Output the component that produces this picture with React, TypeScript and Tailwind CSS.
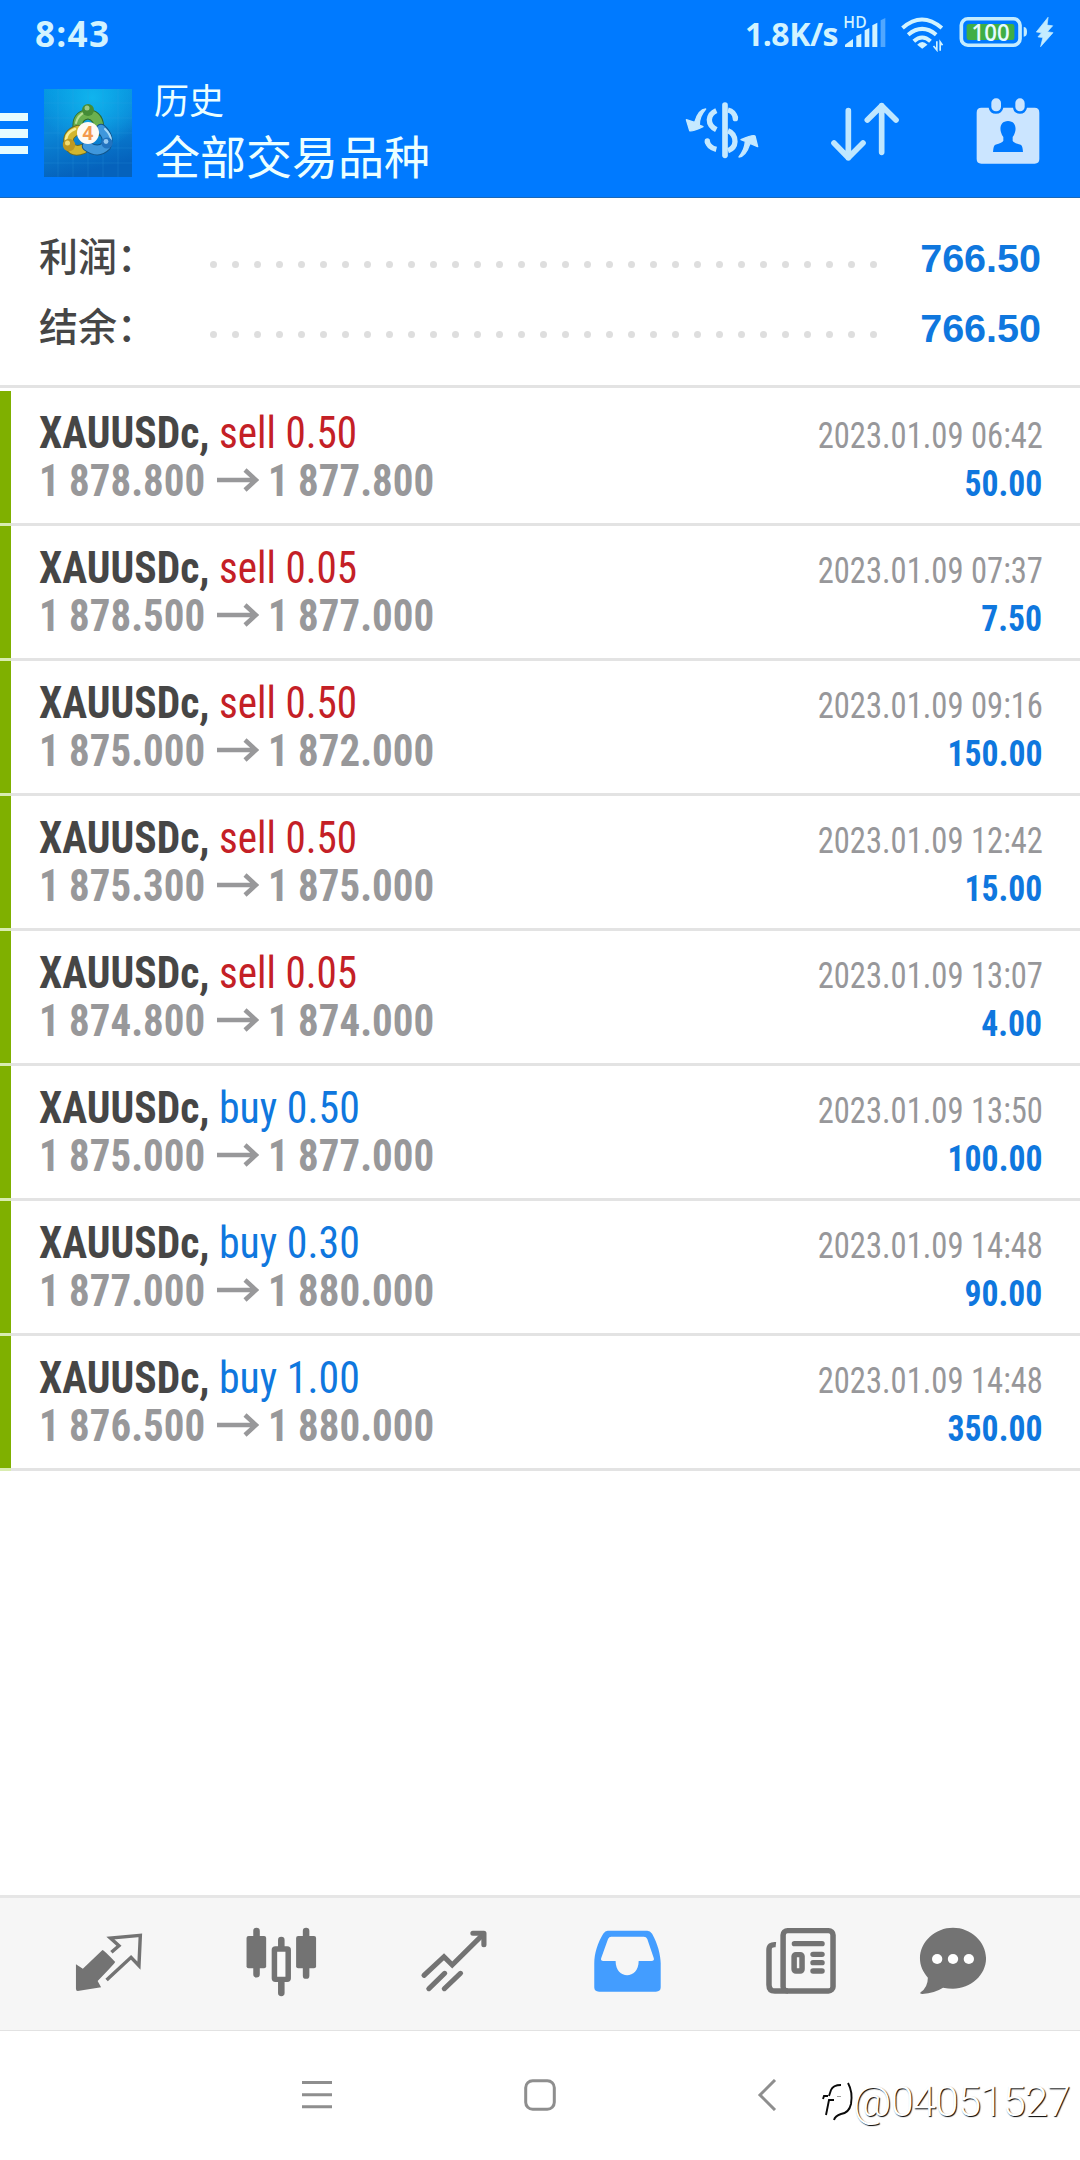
import type { ReactNode } from "react";

type Deal = { side: "sell" | "buy"; volume: string; open: string; close: string; time: string; profit: string };

const deals: Deal[] = [
  { side: "sell", volume: "0.50", open: "1 878.800", close: "1 877.800", time: "2023.01.09 06:42", profit: "50.00" },
  { side: "sell", volume: "0.05", open: "1 878.500", close: "1 877.000", time: "2023.01.09 07:37", profit: "7.50" },
  { side: "sell", volume: "0.50", open: "1 875.000", close: "1 872.000", time: "2023.01.09 09:16", profit: "150.00" },
  { side: "sell", volume: "0.50", open: "1 875.300", close: "1 875.000", time: "2023.01.09 12:42", profit: "15.00" },
  { side: "sell", volume: "0.05", open: "1 874.800", close: "1 874.000", time: "2023.01.09 13:07", profit: "4.00" },
  { side: "buy", volume: "0.50", open: "1 875.000", close: "1 877.000", time: "2023.01.09 13:50", profit: "100.00" },
  { side: "buy", volume: "0.30", open: "1 877.000", close: "1 880.000", time: "2023.01.09 14:48", profit: "90.00" },
  { side: "buy", volume: "1.00", open: "1 876.500", close: "1 880.000", time: "2023.01.09 14:48", profit: "350.00" },
];

function StatusBar() {
  return (
    <div className="flex h-[66px] items-start pr-[26px] pl-[35px] pt-4 font-['Open_Sans','Noto_Sans',sans-serif] font-semibold text-[#d2f3ff]">
      <span className="h-9 text-[35px] font-bold leading-[36px] tracking-[1.3px]">8:43</span>
      <span className="ml-auto h-9 text-[32px] font-bold leading-[35px] tracking-[-0.5px]">1.8K/s</span>
      <svg className="ml-[5px] h-8 w-11 shrink-0 overflow-visible" viewBox="608 48 132 96" fill="#d2f3ff">
        <text x="609" y="84" fontSize="47" fontWeight="600" textLength="70">HD</text>
        <path d="M614 141V134Q628 124 638 117V141Z" />
        <path d="M648 141V108L663 101V141ZM673 141V91L687 84V141ZM696 141V76L711 68V141Z" />
        <path d="M721 141V61L735 54V141Z" opacity=".38" />
      </svg>
      <svg className="ml-[13px] h-9 w-[45px] shrink-0" viewBox="780 48 134 108" fill="none" stroke="#d2f3ff" strokeWidth="12">
        <path d="M787 84Q845 33 905 84M804 104Q846 69 888 104M821 124Q846 101 871 124" />
        <path d="M831 134Q846 118 862 134L846 146Z" fill="#d2f3ff" stroke="none" />
        <path d="M890 124V150L880 138M900 152V126L907 136" strokeWidth="5" />
      </svg>
      <svg className="ml-[14px] h-8 w-[69px] shrink-0" viewBox="955 51 208 96" fill="none">
        <rect x="962" y="59" width="177" height="80" rx="20" stroke="#c4ecff" strokeWidth="11" />
        <rect x="978" y="75" width="144" height="48" rx="7" fill="#3fae45" />
        <path d="M1150 84Q1160 84 1160 99Q1160 113 1150 113Z" fill="#c4ecff" />
        <text x="993" y="125" fontSize="70" fontWeight="600" textLength="115" lengthAdjust="spacingAndGlyphs" fill="#e6fbff">100</text>
      </svg>
      <svg className="ml-[7px] h-8 w-[19px] shrink-0" viewBox="1183 51 58 96" fill="#c4ecff" stroke="#c4ecff" strokeWidth="2">
        <path d="M1223 54L1187 99L1203 101L1192 114L1207 116L1200 144L1238 101L1221 98L1237 80L1220 78Z" />
      </svg>
    </div>
  );
}

function AppLogo() {
  return (
    <svg className="ml-4 h-[88px] w-[88px] shrink-0" viewBox="0 0 88 88">
      <defs>
        <linearGradient id="sky" x1="0" y1="0" x2="0.25" y2="1">
          <stop offset="0" stopColor="#0596e0" />
          <stop offset=".5" stopColor="#0a85d6" />
          <stop offset="1" stopColor="#0562bc" />
        </linearGradient>
        <radialGradient id="glow" cx=".55" cy=".1" r=".6">
          <stop offset="0" stopColor="#10b4ee" />
          <stop offset="1" stopColor="#10b4ee" stopOpacity="0" />
        </radialGradient>
      </defs>
      <rect width="88" height="88" fill="url(#sky)" />
      <rect width="88" height="88" fill="url(#glow)" />
      <path d="M14 0V88M29 0V88M44 0V88M59 0V88M74 0V88M0 14H88M0 29H88M0 44H88M0 59H88M0 74H88" stroke="#35a5e4" strokeWidth=".6" opacity=".35" />
      <g fill="none" strokeLinecap="round">
        <path d="M34 40Q32 27 44 25Q56 27 55 42" stroke="#2f6b2b" strokeWidth="10.5" />
        <path d="M34 40Q32 27 44 25Q56 27 55 42" stroke="#6bb04e" strokeWidth="8.5" />
        <path d="M32 34Q34 26 41 23" stroke="#b8dd94" strokeWidth="2" />
        <path d="M34 41Q22 45 25 56Q29 64 39 60" stroke="#6a6a22" strokeWidth="10.5" />
        <path d="M34 41Q22 45 25 56Q29 64 39 60" stroke="#d2b62e" strokeWidth="8.5" />
        <path d="M31 40Q23 43 22 50" stroke="#f8ed93" strokeWidth="2.6" />
        <path d="M57 40Q66 48 62 57Q54 65 43 57" stroke="#12558b" strokeWidth="10.5" />
        <path d="M57 40Q66 48 62 57Q54 65 43 57" stroke="#3f97dc" strokeWidth="8.5" />
        <path d="M61 40Q67 46 67 51" stroke="#a6d8f7" strokeWidth="2" />
      </g>
      <circle cx="44" cy="21" r="6" fill="#458c37" /><circle cx="43" cy="19" r="2.5" fill="#9cc987" />
      <circle cx="25" cy="56" r="6.2" fill="#bd9822" /><circle cx="23.5" cy="54" r="2.5" fill="#f2dc70" />
      <circle cx="63" cy="54" r="5.6" fill="#2273bf" /><circle cx="62" cy="52.5" r="2.4" fill="#95c9f2" />
      <circle cx="44" cy="44" r="11" fill="#fffaf3" />
      <text x="44" y="51" textAnchor="middle" fontSize="19" fontWeight="700" fill="#f39a4e" fontFamily="Open Sans, sans-serif">4</text>
    </svg>
  );
}

function Toolbar() {
  return (
    <div className="flex h-[132px] items-start pr-[33px] pt-[23px]">
      <div className="mt-6 flex flex-col gap-2">
        <i className="h-[8.5px] w-7 bg-[#e6fcff]" />
        <i className="h-[8.5px] w-7 bg-[#e6fcff]" />
        <i className="h-[8.5px] w-7 bg-[#e6fcff]" />
      </div>
      <AppLogo />
      <div className="-mt-[10px] ml-[22px] flex flex-col font-['Noto_Sans_CJK_SC',sans-serif] font-normal text-[#ecffff]">
        <span className="h-[45px] text-[35px] leading-[40px]">历史</span>
        <span className="h-[60px] text-[46px] leading-[60px]">全部交易品种</span>
      </div>
      <div className="ml-auto mt-0.5 flex gap-[65px]">
        <svg className="h-[78px] w-[78px]" viewBox="129 273 234 234" fill="none" stroke="#c5e9ff" strokeWidth="16" strokeLinecap="round">
          <path d="M255 315V466" strokeWidth="17" />
          <path d="M264 330Q282 334 287 355M264 392Q285 400 285 425Q284 445 264 452M229 389Q208 378 208 359Q210 340 229 332M202 424Q205 442 229 448" strokeLinecap="butt" />
          <path d="M202 423V425M286 353V356" />
          <path d="M197 327Q176 328 164 367L139 359L149 392Q152 397 189 380L178 375Q177 350 197 327Z" fill="#c5e9ff" strokeWidth="4" strokeLinejoin="round" />
          <path d="M297 471Q317 470 330 430L353 440L345 408Q342 402 303 419L316 424Q315 448 297 471Z" fill="#c5e9ff" strokeWidth="4" strokeLinejoin="round" />
        </svg>
        <svg className="h-[78px] w-[78px]" viewBox="558 273 234 234" fill="none" stroke="#bfe7ff" strokeWidth="17" strokeLinecap="round" strokeLinejoin="round">
          <path d="M625 332V473M582 429L625 473L669 429" />
          <path d="M725 457V317M682 360L725 317L768 360" />
        </svg>
        <svg className="h-[78px] w-[78px]" viewBox="987 273 234 234" fill="#cbe5ff">
          <path d="M1024 323H1046Q1049 341 1068 341Q1086 341 1090 323H1119Q1122 341 1140 341Q1157 341 1161 323H1184Q1198 323 1198 338V477Q1198 491 1184 491H1024Q1010 491 1010 477V338Q1010 323 1024 323Z" />
          <rect x="1054" y="295" width="29" height="39" rx="14" />
          <rect x="1126" y="295" width="28" height="39" rx="14" />
          <path d="M1104 363C1124 363 1130 381 1125 397Q1122 408 1118 411V422Q1119 428 1142 434Q1148 437 1149 456H1059Q1060 437 1066 434Q1088 428 1090 422V411Q1086 408 1083 397C1078 381 1084 363 1104 363Z" fill="#007aff" />
        </svg>
      </div>
    </div>
  );
}

function SummaryLine({ label, value }: { label: string; value: string }) {
  return (
    <div className="flex h-[70px] items-center pr-[39px] pl-[39px]">
      <span className="-mt-[7px] w-[171px] font-['Noto_Sans_CJK_SC',sans-serif] text-[39px] font-medium leading-[70px] text-[#464646]">{label}</span>
      <div className="mt-[15px] flex gap-[15px]">
        {Array.from({ length: 31 }, (_, i) => (
          <i key={i} className="h-[7px] w-[7px] rounded-full bg-[#dedede]" />
        ))}
      </div>
      <span className="mt-0.5 ml-auto font-['Liberation_Sans',sans-serif] text-[39.5px] font-bold leading-[70px] text-[#0f77de]">{value}</span>
    </div>
  );
}

function DealRow({ deal }: { deal: Deal }) {
  return (
    <div className="flex h-[135px] border-b-[3px] border-[#e3e3e3] font-['Roboto_Condensed',Roboto,sans-serif]">
      <div className="-mb-[3px] flex w-[11px] flex-col">
        <i className="h-[132px] bg-[#7fb000]" />
        <i className="h-[3px] bg-[#d9ecb0]" />
      </div>
      <div className="flex flex-col pl-7 pt-[18px] text-[44px] leading-[48px]">
        <div className="flex h-12 whitespace-pre">
          <span className="w-[180px] origin-left scale-x-[0.945] font-bold text-[#464646]">XAUUSDc,</span>
          <span className={deal.side === "sell" ? "origin-left scale-x-[0.935] text-[#c42026]" : "origin-left scale-x-[0.95] text-[#0f77de]"}>
            {deal.side} {deal.volume}
          </span>
        </div>
        <div className="flex h-12 items-start font-bold text-[#98989a]">
          <span className="w-[178px] origin-left scale-x-[0.93] whitespace-pre">{deal.open}</span>
          <svg className="mt-[11px] h-6 w-[42px]" viewBox="0 0 42 24" fill="none" stroke="#98989a" strokeWidth="4.5">
            <path d="M0 12H38M28 2L39 12L28 22" />
          </svg>
          <span className="ml-[9px] origin-left scale-x-[0.93] whitespace-pre">{deal.close}</span>
        </div>
      </div>
      <div className="ml-auto flex flex-col items-end pr-[37.5px] pt-[21px] text-[36px] leading-[48px]">
        <span className="origin-right scale-x-[0.905] text-[#97979a]">{deal.time}</span>
        <span className="origin-right scale-x-[0.935] font-bold text-[#0f77de]">{deal.profit}</span>
      </div>
    </div>
  );
}

function NavIcon({ box, className, children }: { box: string; className?: string; children: ReactNode }) {
  return (
    <svg className={"h-[84px] w-[84px] shrink-0 " + (className ?? "")} viewBox={box} preserveAspectRatio="none" fill="none" stroke="#737373">
      {children}
    </svg>
  );
}

function TabBar() {
  return (
    <div className="flex h-[136px] gap-[89px] border-t-[3px] border-b border-t-[#e6e6e6] border-b-[#e2e2e2] bg-[#f6f6f6] pl-[67px] pt-[22px]">
      <NavIcon box="193 120 244 252">
        <path d="M219 253L239 266L296 210Q300 210 333 246Q332 250 282 303L292 322L224 333Q219 333 219 326Z" fill="#737373" stroke="none" />
        <path d="M322 217L344 197L319 174L406 166L402 257L379 232L308 300" strokeWidth="10" />
      </NavIcon>
      <NavIcon box="696 120 244 252">
        <path d="M744 153V283M888 153V287M816 180V205M816 300V339" strokeWidth="19" strokeLinecap="round" />
        <rect x="715" y="168" width="57" height="97" rx="6" fill="#737373" stroke="none" />
        <rect x="859" y="168" width="58" height="97" rx="6" fill="#737373" stroke="none" />
        <rect x="796" y="207" width="40" height="91" rx="3" strokeWidth="16" fill="#fafafa" />
      </NavIcon>
      <NavIcon box="1199 120 244 252">
        <g strokeWidth="15" strokeLinecap="round">
          <path d="M1231 286L1289 230L1313 255L1403 163" />
          <path d="M1373 160H1405V194" strokeLinejoin="round" />
          <path d="M1245 326L1291 280M1290 326L1337 280" />
        </g>
      </NavIcon>
      <NavIcon box="134 120 244 252">
        <path fillRule="evenodd" d="M197 152H312Q320 152 326 161C342 190 351 225 351 250V322Q351 335 337 335H172Q158 335 158 322V250C158 220 168 188 184 161Q190 152 197 152ZM207 170Q201 170 198 177L178 235Q176 243 184 243H220C220 300 287 300 287 243H324Q333 243 331 235L312 177Q309 170 302 170Z" fill="#439dff" stroke="none" />
      </NavIcon>
      <NavIcon box="636 120 244 252">
        <rect x="706" y="152" width="145" height="181" rx="13" strokeWidth="16" />
        <path d="M685 194Q665 192 665 210V314Q665 333 682 333H720" strokeWidth="16" />
        <path d="M739 191H819M793 223H819M793 248H819M793 273H819" strokeWidth="16" strokeLinecap="round" />
        <rect x="738" y="224" width="23" height="49" rx="5" strokeWidth="16" />
      </NavIcon>
      <NavIcon box="1077 120 244 252" className="-ml-[20.6px]">
        <path d="M1199 143C1250 143 1295 184 1295 235C1295 286 1250 326 1199 326Q1185 326 1170 323Q1146 339 1110 342Q1101 342 1105 337Q1126 321 1126 293C1112 276 1103 258 1103 235C1103 184 1148 143 1199 143Z" fill="#737373" stroke="none" />
        <g fill="#fff" stroke="none">
          <circle cx="1153" cy="237" r="15" />
          <circle cx="1199" cy="237" r="15" />
          <circle cx="1245" cy="237" r="15" />
        </g>
      </NavIcon>
    </div>
  );
}

function SystemNav() {
  return (
    <div className="flex h-[129px] items-start pl-[302px] pt-12">
      <svg className="h-8 w-[30px] shrink-0" viewBox="0 0 30 32" stroke="#8e8e8e" strokeWidth="3">
        <path d="M0 3.5H30M0 15.7H30M0 27.7H30" />
      </svg>
      <svg className="ml-48 h-8 w-8 shrink-0" viewBox="0 0 32 32" fill="none" stroke="#8e8e8e" strokeWidth="3">
        <rect x="1.7" y="1.7" width="28.6" height="28.6" rx="7" />
      </svg>
      <svg className="ml-[201px] h-8 w-5 shrink-0" viewBox="0 0 20 32" fill="none" stroke="#8e8e8e" strokeWidth="3">
        <path d="M18 1L3 16L18 31" />
      </svg>
      <div className="ml-[44px] -mt-px flex items-start">
        <svg className="mt-1 h-[42px] w-[34px] shrink-0" viewBox="0 0 34 42" fill="none" stroke="#0a0a0a" strokeWidth="1.9">
          <path d="M5 33L8 18H13M2 17L3 14H7M8 14L10 8Q12 3 20 3M27 1Q32 10 30 22Q28 31 20 32Q14 34 13 38" />
          <path d="M16 14.5H20" strokeWidth=".8" opacity=".5" />
        </svg>
        <span className="-ml-0.5 font-['Roboto',sans-serif] text-[42px] font-light leading-[48px] tracking-[-0.9px] text-white [text-shadow:1px_1px_1px_#000]">@04051527</span>
      </div>
    </div>
  );
}

export default function App() {
  return (
    <div className="flex h-[2160px] w-[1080px] flex-col overflow-hidden bg-white">
      <header className="flex h-[198px] flex-col border-b border-[#1b68b8] bg-[#007aff]">
        <StatusBar />
        <Toolbar />
      </header>
      <section className="flex h-[190px] flex-col border-b-[3px] border-[#e3e3e3] pt-6">
        <SummaryLine label="利润：" value="766.50" />
        <SummaryLine label="结余：" value="766.50" />
      </section>
      <main className="flex flex-1 flex-col pt-[3px]">
        {deals.map((deal, i) => (
          <DealRow key={i} deal={deal} />
        ))}
      </main>
      <TabBar />
      <SystemNav />
    </div>
  );
}
